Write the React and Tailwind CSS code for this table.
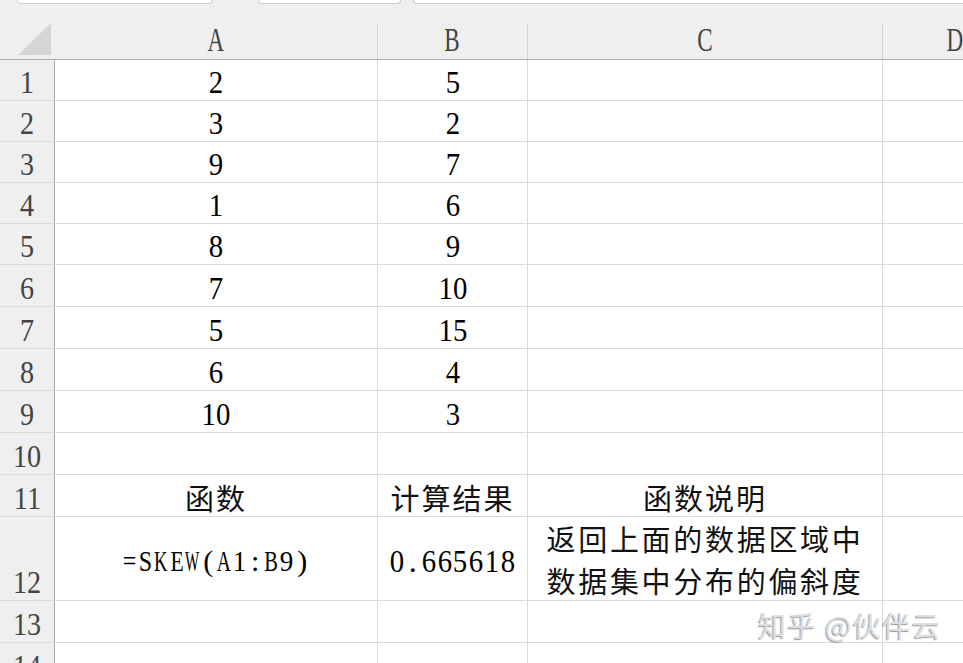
import React from "react";

const SERIF = "font-['Liberation_Serif','Noto_Sans_CJK_SC',serif]";
const CJK = "font-['Noto_Sans_CJK_SC',sans-serif]";

const SX = {
  "=": "scale-x-[0.8]",
  S: "scale-x-[0.8]",
  K: "scale-x-[0.62]",
  E: "scale-x-[0.72]",
  W: "scale-x-[0.5]",
  "(": "scale-x-[1]",
  ")": "scale-x-[1]",
  A: "scale-x-[0.65]",
  B: "scale-x-[0.68]",
  ":": "scale-x-[1]",
  ".": "scale-x-[1]",
};

function Mono({ text, slot, size }) {
  return (
    <span className={`${SERIF} ${size} leading-none flex text-black`}>
      {text.split("").map((c, i) => (
        <span key={i} className={`${slot} inline-flex justify-center shrink-0`}>
          <span className={`inline-block ${SX[c] || "scale-x-[0.9]"}`}>{c}</span>
        </span>
      ))}
    </span>
  );
}

function Num({ v }) {
  return (
    <span className={`${SERIF} text-[32px] leading-none inline-block scale-x-[0.9] text-black`}>{v}</span>
  );
}

function Cjk({ children }) {
  return (
    <span className={`${CJK} text-[29px] leading-none tracking-[2px] text-[#111]`}>{children}</span>
  );
}

const rows = [
  { n: 1, h: "h-[41px]", a: "2", b: "5" },
  { n: 2, h: "h-[41px]", a: "3", b: "2" },
  { n: 3, h: "h-[41px]", a: "9", b: "7" },
  { n: 4, h: "h-[41px]", a: "1", b: "6" },
  { n: 5, h: "h-[41px]", a: "8", b: "9" },
  { n: 6, h: "h-[42px]", a: "7", b: "10" },
  { n: 7, h: "h-[42px]", a: "5", b: "15" },
  { n: 8, h: "h-[42px]", a: "6", b: "4" },
  { n: 9, h: "h-[42px]", a: "10", b: "3" },
  { n: 10, h: "h-[42px]", a: "", b: "" },
];

function RowHead({ n }) {
  return (
    <div className="w-[55px] shrink-0 bg-[#efefef] border-r border-[#a9a9a9] flex items-end justify-center pb-[2px]">
      <span className={`${SERIF} text-[32px] leading-none inline-block scale-x-[0.88] text-[#444]`}>{n}</span>
    </div>
  );
}

function Row({ n, h, children }) {
  return (
    <div className={`${h} flex border-b border-[#dadada] shrink-0`}>
      <RowHead n={n} />
      {children}
    </div>
  );
}

function ColHead({ w, label }) {
  return (
    <div className={`${w} shrink-0 flex flex-col`}>
      <div className="h-[19px]" />
      <div className="flex-1 border-r border-[#d6d6d6] flex items-end justify-center pb-[2px]">
        <span className={`${SERIF} text-[33px] leading-none inline-block scale-x-[0.7] text-[#444]`}>{label}</span>
      </div>
    </div>
  );
}

export default function App() {
  return (
    <div className="relative w-[963px] h-[663px] overflow-hidden bg-white">
      <div className="bg-[#efefef]">
        <div className="h-[4px] flex">
          <div className="ml-[17px] w-[196px] h-[4px] bg-white border-x border-b border-[#cdcdcd] rounded-b-[6px]" />
          <div className="ml-[45px] w-[143px] h-[4px] bg-white border-x border-b border-[#cdcdcd] rounded-b-[6px]" />
          <div className="ml-[12px] flex-1 h-[4px] bg-white border-l border-b border-[#cdcdcd] rounded-bl-[6px]" />
        </div>
        <div className="h-[56px] flex border-b border-[#a9a9a9]">
          <div className="w-[55px] shrink-0">
            <svg width="55" height="55" viewBox="0 0 55 55" className="block">
              <polygon points="18,51 51,51 51,19" fill="#d5d5d5" />
            </svg>
          </div>
          <ColHead w="w-[323px]" label="A" />
          <ColHead w="w-[150px]" label="B" />
          <ColHead w="w-[355px]" label="C" />
          <ColHead w="w-[145px]" label="D" />
        </div>
      </div>

      {rows.map((r) => (
        <Row key={r.n} n={r.n} h={r.h}>
          <div className="w-[323px] shrink-0 border-r border-[#dadada] flex items-end justify-center pb-[2px]">
            {r.a && <Num v={r.a} />}
          </div>
          <div className="w-[150px] shrink-0 border-r border-[#dadada] flex items-end justify-center pb-[2px]">
            {r.b && <Num v={r.b} />}
          </div>
          <div className="w-[355px] shrink-0 border-r border-[#dadada]" />
          <div className="w-[145px] shrink-0 border-r border-[#dadada]" />
        </Row>
      ))}

      <Row n={11} h="h-[42px]">
        <div className="w-[323px] shrink-0 border-r border-[#dadada] flex items-center justify-center pt-[4px]">
          <Cjk>函数</Cjk>
        </div>
        <div className="w-[150px] shrink-0 border-r border-[#dadada] flex items-center justify-center pt-[4px]">
          <Cjk>计算结果</Cjk>
        </div>
        <div className="w-[355px] shrink-0 border-r border-[#dadada] flex items-center justify-center pt-[4px]">
          <Cjk>函数说明</Cjk>
        </div>
        <div className="w-[145px] shrink-0 border-r border-[#dadada]" />
      </Row>

      <Row n={12} h="h-[84px]">
        <div className="w-[323px] shrink-0 border-r border-[#dadada] flex items-center justify-center pt-[5px]">
          <Mono text="=SKEW(A1:B9)" slot="w-[15.7px]" size="text-[30px]" />
        </div>
        <div className="w-[150px] shrink-0 border-r border-[#dadada] flex items-center justify-center pt-[5px]">
          <Mono text="0.665618" slot="w-[15.9px]" size="text-[32px]" />
        </div>
        <div className="w-[355px] shrink-0 border-r border-[#dadada] flex flex-col items-center justify-center">
          <div className={`${CJK} text-[29px] leading-[42px] tracking-[2.7px] text-[#111] text-center`}>
            <div>返回上面的数据区域中</div>
            <div>数据集中分布的偏斜度</div>
          </div>
        </div>
        <div className="w-[145px] shrink-0 border-r border-[#dadada]" />
      </Row>

      <Row n={13} h="h-[42px]">
        <div className="w-[323px] shrink-0 border-r border-[#dadada]" />
        <div className="w-[150px] shrink-0 border-r border-[#dadada]" />
        <div className="w-[355px] shrink-0 border-r border-[#dadada]" />
        <div className="w-[145px] shrink-0 border-r border-[#dadada]" />
      </Row>

      <Row n={14} h="h-[42px]">
        <div className="w-[323px] shrink-0 border-r border-[#dadada]" />
        <div className="w-[150px] shrink-0 border-r border-[#dadada]" />
        <div className="w-[355px] shrink-0 border-r border-[#dadada]" />
        <div className="w-[145px] shrink-0 border-r border-[#dadada]" />
      </Row>

      <div
        className={`absolute left-[758px] top-[605px] ${CJK} text-[28px] leading-[40px] tracking-[1.5px] text-[#dedede] whitespace-nowrap [text-shadow:-1px_1px_1px_#9a9a9a]`}
      >
        知乎 @伙伴云
      </div>
    </div>
  );
}
